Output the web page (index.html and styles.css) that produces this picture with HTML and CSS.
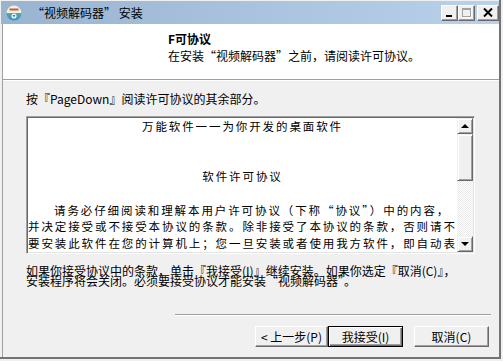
FILE: index.html
```html
<!DOCTYPE html>
<html lang="zh-CN">
<head>
    <meta charset="UTF-8">
    <title>“视频解码器” 安装</title>
    <link rel="stylesheet" href="styles.css">
</head>
<body>

<div class="window">
    <div class="titlebar">
        <svg class="app-icon" width="16" height="16" viewBox="0 0 16 16">
            <defs>
                <linearGradient id="lower" x1="0" y1="0" x2="0" y2="1">
                    <stop offset="0" stop-color="#7cc85a"/>
                    <stop offset="1" stop-color="#2f8fd0"/>
                </linearGradient>
            </defs>
            <circle cx="8" cy="8" r="7.5" fill="url(#lower)"/>
            <path d="M0.5 8 A7.5 7.5 0 0 1 15.5 8 Z" fill="#f4efdf"/>
            <rect x="3.5" y="3.5" width="9" height="2" fill="#c9574e"/>
            <circle cx="8" cy="11" r="2.6" fill="#eaf6ff"/>
            <path d="M6.6 10 L9.4 10 L8 12.4 Z" fill="#1e7fd6"/>
        </svg>
        <span class="title-text">“视频解码器” 安装</span>
        <div class="title-buttons">
            <div class="tbtn tbtn-min"><span class="min-bar"></span></div>
            <div class="tbtn tbtn-max"><span class="max-box"></span></div>
            <div class="tbtn tbtn-close">
                <svg width="10" height="9" viewBox="0 0 10 9">
                    <path d="M1 0.5 L9 8.5 M9 0.5 L1 8.5" stroke="#000" stroke-width="2"/>
                </svg>
            </div>
        </div>
    </div>

    <div class="frame">
        <div class="header">
            <div class="header-title">F可协议</div>
            <div class="header-sub">在安装“视频解码器”之前，请阅读许可协议。</div>
        </div>

        <div class="content">
            <div class="hint">按『PageDown』阅读许可协议的其余部分。</div>

            <div class="license-box">
                <div class="license-text">
                    <div class="center">万能软件一一为你开发的桌面软件</div>
                    <div>&nbsp;</div>
                    <div>&nbsp;</div>
                    <div class="center">软件许可协议</div>
                    <div>&nbsp;</div>
                    <div class="indent">请务必仔细阅读和理解本用户许可协议（下称“协议”）中的内容，</div>
                    <div>并决定接受或不接受本协议的条款。除非接受了本协议的条款，否则请不</div>
                    <div>要安装此软件在您的计算机上；您一旦安装或者使用我方软件，即自动表</div>
                </div>
                <div class="scrollbar">
                    <div class="sb-btn"><span class="arrow-up"></span></div>
                    <div class="sb-thumb"></div>
                    <div class="sb-track"></div>
                    <div class="sb-btn"><span class="arrow-down"></span></div>
                </div>
            </div>

            <p class="notice">如果你接受协议中的条款，单击『我接受(I)』继续安装。如果你选定『取消(C)』，<br>安装程序将会关闭。必须要接受协议才能安装“视频解码器”。</p>

            <div class="separator"></div>

            <div class="buttons">
                <button class="btn btn-back">&lt; 上一步(P)</button>
                <button class="btn btn-default">我接受(I)</button>
                <button class="btn btn-cancel">取消(C)</button>
            </div>
        </div>
    </div>
</div>

</body>
</html>
```

FILE: styles.css
```css
* {
    box-sizing: border-box;
}

body {
    margin: 0;
    background-color: #f0f0f0;
    font-family: "Noto Sans CJK SC", "Liberation Sans", sans-serif;
    font-size: 12px;
    color: #000;
}

.window {
    width: 501px;
    height: 359px;
    padding-top: 1px;
    background-color: #f0f0f0;
    border-right: 2px solid #737373;
    border-bottom: 2px solid #737373;
    display: flex;
    flex-direction: column;
}

.titlebar {
    height: 23px;
    margin-left: 1px;
    padding-left: 5px;
    display: flex;
    align-items: center;
    background: linear-gradient(to right, #99b4d1, #b9d1ea);
}

.app-icon {
    flex: none;
}

.title-text {
    margin-left: 10px;
    line-height: 16px;
}

.title-buttons {
    margin-left: auto;
    display: flex;
    align-items: center;
}

.tbtn {
    width: 17px;
    height: 16px;
    background-color: #f0f0f0;
    border-top: 1px solid #fff;
    border-left: 1px solid #fff;
    border-right: 1px solid #696969;
    border-bottom: 1px solid #696969;
    box-shadow: inset -1px -1px 0 #a0a0a0;
    display: flex;
    align-items: center;
    justify-content: center;
    position: relative;
}

.tbtn-close {
    width: 22px;
    margin-left: 2px;
}

.min-bar {
    position: absolute;
    left: 4px;
    bottom: 3px;
    width: 6px;
    height: 2px;
    background-color: #000;
}

.max-box {
    width: 9px;
    height: 9px;
    border: 1px solid #a0a0a0;
    border-top-width: 2px;
    box-shadow: 1px 1px 0 #fff;
}

.frame {
    flex: 1;
    margin-left: 2px;
    border-left: 1px solid #a0a0a0;
    display: flex;
    flex-direction: column;
}

.header {
    height: 56px;
    padding: 6px 0 0 165px;
    background-color: #fff;
    border-bottom: 1px solid #a0a0a0;
    box-shadow: 0 1px 0 #fff;
    line-height: 17px;
}

.header-title {
    font-weight: bold;
}

.content {
    flex: 1;
    padding: 11px 0 0 23px;
}

.hint {
    line-height: 16px;
}

.license-box {
    margin-top: 9px;
    width: 449px;
    height: 138px;
    background-color: #fff;
    border: 1px solid;
    border-color: #a0a0a0 #fff #fff #a0a0a0;
    box-shadow: inset 1px 1px 0 #696969, inset -1px -1px 0 #e3e3e3;
    padding: 1px;
    display: flex;
}

.license-text {
    flex: 1;
    overflow: hidden;
    font-size: 11.5px;
    letter-spacing: 1.9px;
    line-height: 16.7px;
    white-space: nowrap;
    padding-left: 0;
}

.center {
    text-align: center;
}

.indent {
    text-indent: 26px;
}

.scrollbar {
    width: 16px;
    display: flex;
    flex-direction: column;
}

.sb-btn, .sb-thumb {
    background-color: #f0f0f0;
    border-top: 1px solid #f0f0f0;
    border-left: 1px solid #f0f0f0;
    border-right: 1px solid #696969;
    border-bottom: 1px solid #696969;
    box-shadow: inset 1px 1px 0 #fff, inset -1px -1px 0 #a0a0a0;
}

.sb-btn {
    height: 16px;
    display: flex;
    align-items: center;
    justify-content: center;
}

.sb-thumb {
    height: 47px;
}

.sb-track {
    flex: 1;
    background: repeating-conic-gradient(#fff 0 25%, #eaeaea 0 50%) 0 0 / 2px 2px;
}

.arrow-up {
    width: 0;
    height: 0;
    border-left: 4px solid transparent;
    border-right: 4px solid transparent;
    border-bottom: 4px solid #000;
}

.arrow-down {
    width: 0;
    height: 0;
    border-left: 4px solid transparent;
    border-right: 4px solid transparent;
    border-top: 4px solid #000;
}

.notice {
    margin: 12px 0 0;
    line-height: 10px;
    white-space: nowrap;
}

.separator {
    margin: 28px 0 0 149px;
    width: 316px;
    height: 2px;
    border-top: 1px solid #a0a0a0;
    border-bottom: 1px solid #fff;
}

.buttons {
    margin-top: 10px;
    padding-right: 10px;
    display: flex;
    justify-content: flex-end;
}

.btn {
    height: 21px;
    width: 75px;
    padding: 0;
    font-family: "Noto Sans CJK SC", "Liberation Sans", sans-serif;
    font-size: 12px;
    color: #000;
    background-color: #f0f0f0;
    border-top: 1px solid #fff;
    border-left: 1px solid #fff;
    border-right: 1px solid #696969;
    border-bottom: 1px solid #696969;
    box-shadow: inset -1px -1px 0 #a0a0a0;
}

.btn-back {
    width: 73px;
}

.btn-default {
    border: 1px solid #000;
    box-shadow: inset 1px 1px 0 #fff, inset -1px -1px 0 #696969, inset -2px -2px 0 #a0a0a0;
}

.btn-cancel {
    margin-left: 11px;
}
```
